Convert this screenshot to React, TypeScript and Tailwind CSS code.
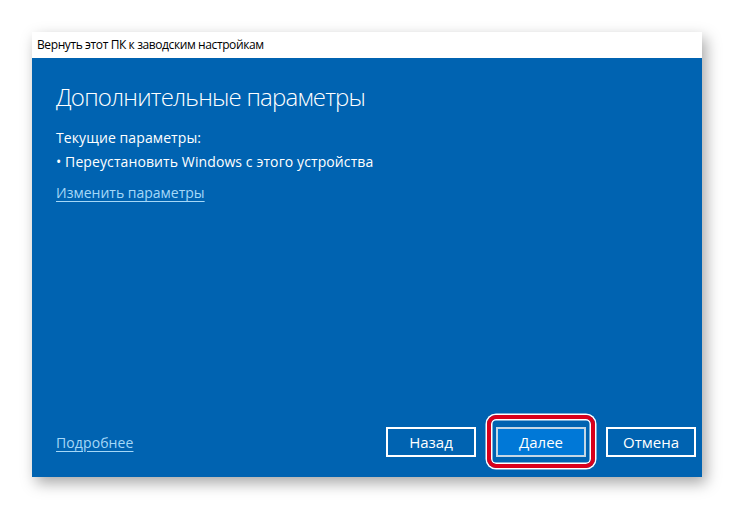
import React from "react";

const ui = { fontFamily: '"Open Sans", "Noto Sans", "Liberation Sans", sans-serif' };

export default function App() {
  return (
    <div className="w-[734px] h-[509px] bg-white pt-[32px] pl-[32px] overflow-hidden" style={ui}>
      <div className="w-[670px] h-[445px] flex flex-col shadow-[4px_6px_14px_rgba(0,0,0,0.35)]">
        <div className="h-[26px] bg-white pl-[5px] flex items-center text-[12px] text-black tracking-[-0.4px]">
          Вернуть этот ПК к заводским настройкам
        </div>
        <div className="flex-1 bg-[#0063b1] flex flex-col pl-[24px] pr-[6px] pb-[20px] text-white">
          <div className="pt-[22px] text-[24px] font-light leading-[34px] tracking-[-0.8px]">
            Дополнительные параметры
          </div>
          <div className="mt-[12px] text-[14px] leading-[24px] tracking-[0.1px]">Текущие параметры:</div>
          <div className="text-[14px] leading-[24px] tracking-[0.1px]">• Переустановить Windows с этого устройства</div>
          <div className="mt-[7px] text-[14px] leading-[24px] text-[#a5d8f8] underline underline-offset-[3px]">
            Изменить параметры
          </div>
          <div className="flex-1" />
          <div className="flex items-center">
            <div className="text-[14px] text-[#a5d8f8] underline underline-offset-[3px] tracking-[0.1px]">Подробнее</div>
            <div className="flex-1" />
            <div className="flex gap-[20px]">
              <div className="w-[90px] h-[30px] border-2 border-white flex items-center justify-center text-[15px]">
                Назад
              </div>
              <div className="relative w-[90px] h-[30px]">
                <div className="absolute left-[-9px] right-[-9px] top-[-12px] bottom-[-11px] rounded-[9px] border-[4px] border-[#d9001b] shadow-[0_0_0_1.5px_#ffffff,inset_0_0_0_1.5px_#ffffff]" />
                <div className="w-full h-full bg-[#0078d7] border-2 border-[#c4d7e6] flex items-center justify-center text-[15px]">
                  Далее
                </div>
              </div>
              <div className="w-[90px] h-[30px] border-2 border-white flex items-center justify-center text-[15px]">
                Отмена
              </div>
            </div>
          </div>
        </div>
      </div>
    </div>
  );
}
